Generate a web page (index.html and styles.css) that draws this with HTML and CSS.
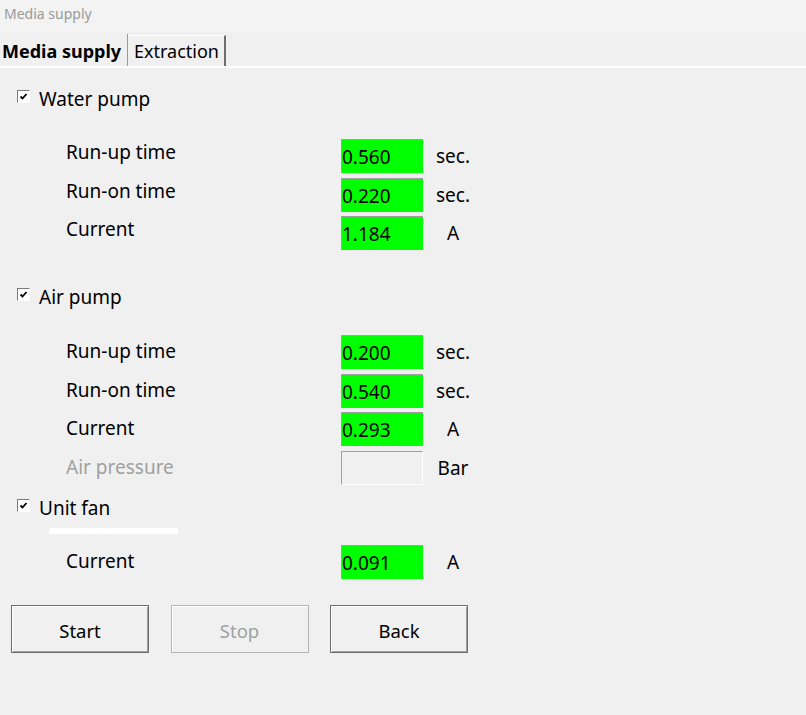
FILE: index.html
```
<!DOCTYPE html>
<html lang="en">
<head>
  <meta charset="UTF-8" />
  <title>Media supply</title>
  <link rel="stylesheet" href="styles.css">
</head>
<body>
  <div class="titlebar">Media supply</div>

  <div class="tabs">
    <div class="tab active">Media supply</div>
    <div class="tab">Extraction</div>
  </div>

  <div class="panel">
    <label class="check first">
      <span class="box"><svg width="11" height="11" viewBox="0 0 11 11"><path d="M2.5 5.5 L4.5 7.5 L8.5 3" fill="none" stroke="#000" stroke-width="1.8"/></svg></span>
      Water pump
    </label>
    <div class="rows water">
      <div class="row"><span class="name">Run-up time</span><span class="field on">0.560</span><span class="unit">sec.</span></div>
      <div class="row"><span class="name">Run-on time</span><span class="field on">0.220</span><span class="unit">sec.</span></div>
      <div class="row"><span class="name">Current</span><span class="field on">1.184</span><span class="unit">A</span></div>
    </div>

    <label class="check air">
      <span class="box"><svg width="11" height="11" viewBox="0 0 11 11"><path d="M2.5 5.5 L4.5 7.5 L8.5 3" fill="none" stroke="#000" stroke-width="1.8"/></svg></span>
      Air pump
    </label>
    <div class="rows airrows">
      <div class="row"><span class="name">Run-up time</span><span class="field on">0.200</span><span class="unit">sec.</span></div>
      <div class="row"><span class="name">Run-on time</span><span class="field on">0.540</span><span class="unit">sec.</span></div>
      <div class="row"><span class="name">Current</span><span class="field on">0.293</span><span class="unit">A</span></div>
      <div class="row"><span class="name off">Air pressure</span><span class="field"></span><span class="unit">Bar</span></div>
    </div>

    <label class="check fan">
      <span class="box"><svg width="11" height="11" viewBox="0 0 11 11"><path d="M2.5 5.5 L4.5 7.5 L8.5 3" fill="none" stroke="#000" stroke-width="1.8"/></svg></span>
      Unit fan
    </label>
    <div class="whitebar"></div>
    <div class="rows fanrows">
      <div class="row"><span class="name">Current</span><span class="field on">0.091</span><span class="unit">A</span></div>
    </div>

    <div class="buttons">
      <button>Start</button>
      <button disabled>Stop</button>
      <button>Back</button>
    </div>
  </div>
</body>
</html>
```

FILE: styles.css
```
body {
  margin: 0;
  background-color: #f0f0f0;
  font-family: "Noto Sans", "Open Sans", sans-serif;
  color: #000;
  width: 806px;
  height: 715px;
  overflow: hidden;
}

.titlebar {
  height: 32px;
  line-height: 28px;
  background-color: #f3f3f3;
  color: #9a9a9a;
  font-size: 14px;
  padding-left: 4px;
}

.tabs {
  display: flex;
  align-items: flex-end;
  height: 34px;
  border-bottom: 2px solid #fff;
}

.tab {
  box-sizing: border-box;
  height: 31px;
  line-height: 30px;
  font-size: 18px;
  padding: 0 0 0 6px;
  width: 98px;
  border-top: 1px solid #fff;
  border-right: 2px solid #6d6d6d;
}

.tab.active {
  font-weight: bold;
  width: 128px;
  padding: 0 0 0 2px;
  line-height: 34px;
  border-top: none;
  border-right: 1px solid #9a9a9a;
  height: 32px;
}

.panel {
  padding-left: 16px;
}

.check {
  display: flex;
  align-items: center;
  height: 24px;
  font-size: 19px;
  gap: 9px;
}

.check.first { margin-top: 19px; }
.check.air { margin-top: 35px; }
.check.fan { margin-top: 11px; }

.box {
  display: block;
  width: 11px;
  height: 11px;
  margin-left: 1px;
  border-top: 1px solid #7a7a7a;
  border-left: 1px solid #7a7a7a;
  border-bottom: 1px solid #fff;
  border-right: 1px solid #fff;
  background-color: #fff;
  margin-top: -5px;
}

.box svg {
  display: block;
}

.rows {
  display: flex;
  flex-direction: column;
  padding-left: 50px;
}

.rows.water { margin-top: 28px; gap: 4.5px; }
.rows.airrows { margin-top: 26px; gap: 4.67px; }
.rows.fanrows { margin-top: 11px; }

.row {
  display: flex;
  height: 34px;
  font-size: 19px;
}

.name {
  width: 275px;
  line-height: 33px;
}

.water .name {
  line-height: 27px;
}

.name.off {
  color: #a0a0a0;
}

.field {
  box-sizing: border-box;
  width: 82px;
  height: 34px;
  line-height: 34px;
  padding-left: 0;
  border-top: 1px solid #a0a0a0;
  border-left: 1px solid #a0a0a0;
  border-bottom: 1px solid #fff;
  border-right: 1px solid #fff;
}

.field.on {
  background-color: #00ff00;
  border-right: none;
  border-bottom: none;
}

.unit {
  width: 60px;
  text-align: center;
  line-height: 34px;
}

.whitebar {
  width: 129px;
  height: 6px;
  background-color: #fff;
  margin: 8px 0 0 33px;
}

.buttons {
  display: flex;
  gap: 21.5px;
  margin: 26px 0 0 -5px;
}

button {
  width: 138px;
  height: 48px;
  padding: 3px 0 0;
  font-family: "Noto Sans", "Open Sans", sans-serif;
  font-size: 18.5px;
  color: #000;
  background-color: #f0f0f0;
  border: 1px solid #6d6d6d;
  box-shadow: inset 1px 1px #fff, inset -1px -1px #a0a0a0;
}

button:disabled {
  color: #a0a0a0;
  border-color: #b5b5b5;
  box-shadow: inset 1px 1px #fff;
}
```
